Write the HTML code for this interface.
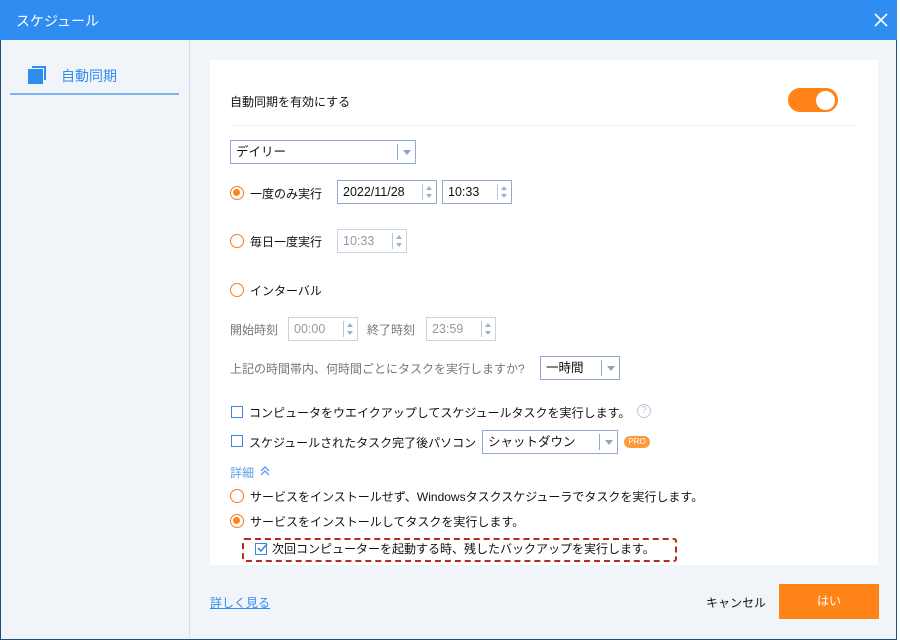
<!DOCTYPE html>
<html><head><meta charset="utf-8"><style>
*{margin:0;padding:0;box-sizing:border-box}
body{width:900px;height:640px;overflow:hidden;background:#fff;font-family:"Liberation Sans","Noto Sans CJK JP",sans-serif;font-size:12px;color:#111;position:relative}
.a{position:absolute;white-space:nowrap}
.win{position:absolute;left:0;top:0;width:897px;height:640px;border:1px solid #1d4f86;background:#f1f5fa;border-top:none}
.title{position:absolute;left:0;top:0;width:897px;height:40px;background:#2f8cf0;color:#fff;font-size:14px}
.card{position:absolute;left:210px;top:60px;width:668px;height:505px;background:#fff}
.box{position:absolute;border:1px solid #8fa9d2;background:#fff;height:24px;font-size:12.5px;padding-left:5px;line-height:23px}
.dis{border-color:#c7d4e8;color:#999}
.sp{position:absolute;right:0;top:3px;width:14px;height:16px;border-left:1px solid #b6c6dc}
.sp:before{content:"";position:absolute;left:3px;top:2px;border:3.5px solid transparent;border-bottom:4px solid #9cb1cf;border-top:none}
.sp:after{content:"";position:absolute;left:3px;top:10px;border:3.5px solid transparent;border-top:4px solid #9cb1cf;border-bottom:none}
.dd{position:absolute;right:0;top:3px;width:18px;height:16px;border-left:1px solid #8fa9d2}
.dd:after{content:"";position:absolute;left:5px;top:6px;border:4px solid transparent;border-top:5px solid #8aa3c6;border-bottom:none}
.r{position:absolute;width:14px;height:14px;border:1.5px solid #f47a2a;border-radius:50%;background:#fff}
.r.on:after{content:"";position:absolute;left:2px;top:2px;width:7px;height:7px;border-radius:50%;background:#ff8317}
.cb{position:absolute;width:12px;height:12px;border:1.5px solid #3a86e6;background:#fff}
</style></head><body>
<div class="win"></div>
<div class="title"><span class="a" style="left:16px;top:11px">スケジュール</span>
<svg class="a" style="left:874px;top:13px" width="14" height="14" viewBox="0 0 14 14"><path d="M1 1L13 13M13 1L1 13" stroke="#fff" stroke-width="1.6"/></svg></div>
<div class="a" style="left:189px;top:40px;width:1px;height:598px;background:#d6dde7"></div>
<div class="a" style="left:32px;top:66px;width:14px;height:14px;border-top:2px solid #2f8cf0;border-right:2px solid #2f8cf0"></div>
<div class="a" style="left:28px;top:69px;width:15px;height:15px;background:#2f8cf0"></div>
<div class="a" style="left:61px;top:66px;font-size:14px;color:#2f8cf0">自動同期</div>
<div class="a" style="left:10px;top:93px;width:169px;height:2px;background:#7bb2f0"></div>

<div class="card"></div>
<div class="a" style="left:230px;top:93px">自動同期を有効にする</div>
<div class="a" style="left:788px;top:88px;width:50px;height:24px;border-radius:12px;background:#ff8317"></div>
<div class="a" style="left:816px;top:91px;width:19px;height:19px;border-radius:50%;background:#fff"></div>
<div class="a" style="left:230px;top:125px;width:628px;height:1px;background:#eef0f3"></div>

<div class="box" style="left:230px;top:140px;width:186px">デイリー<div class="dd"></div></div>

<div class="r on" style="left:230px;top:186px"></div>
<div class="a" style="left:250px;top:185px">一度のみ実行</div>
<div class="box" style="left:337px;top:180px;width:100px">2022/11/28<div class="sp"></div></div>
<div class="box" style="left:442px;top:180px;width:70px">10:33<div class="sp"></div></div>

<div class="r" style="left:230px;top:234px"></div>
<div class="a" style="left:250px;top:233px">毎日一度実行</div>
<div class="box dis" style="left:337px;top:229px;width:70px">10:33<div class="sp"></div></div>

<div class="r" style="left:230px;top:283px"></div>
<div class="a" style="left:250px;top:282px">インターバル</div>

<div class="a" style="left:230px;top:321px;color:#777">開始時刻</div>
<div class="box dis" style="left:288px;top:317px;width:70px">00:00<div class="sp"></div></div>
<div class="a" style="left:367px;top:321px;color:#777">終了時刻</div>
<div class="box dis" style="left:426px;top:317px;width:70px">23:59<div class="sp"></div></div>

<div class="a" style="left:230px;top:360px;color:#777">上記の時間帯内、何時間ごとにタスクを実行しますか?</div>
<div class="box" style="left:540px;top:356px;width:80px">一時間<div class="dd"></div></div>

<div class="cb" style="left:231px;top:406px"></div>
<div class="a" style="left:249px;top:404px">コンピュータをウエイクアップしてスケジュールタスクを実行します。</div>
<div class="a" style="left:637px;top:404px;width:14px;height:14px;border:1.5px solid #b7c6da;border-radius:50%;color:#b7c6da;font-size:10px;text-align:center;line-height:11px">?</div>

<div class="cb" style="left:231px;top:435px"></div>
<div class="a" style="left:249px;top:434px">スケジュールされたタスク完了後パソコン</div>
<div class="box" style="left:482px;top:430px;width:136px">シャットダウン<div class="dd"></div></div>
<div class="a" style="left:624px;top:436px;width:26px;height:12px;border-radius:6px;background:#ff9a3c;color:#fff;font-size:8px;text-align:center;line-height:12px">PRO</div>

<div class="a" style="left:230px;top:464px;color:#5aa0ea">詳細</div>
<svg class="a" style="left:260px;top:466px" width="10" height="10" viewBox="0 0 10 10"><path d="M1 5L5 1L9 5M1 9L5 5L9 9" fill="none" stroke="#5aa0ea" stroke-width="1.4"/></svg>

<div class="r" style="left:230px;top:489px"></div>
<div class="a" style="left:250px;top:488px">サービスをインストールせず、Windowsタスクスケジューラでタスクを実行します。</div>
<div class="r on" style="left:230px;top:514px"></div>
<div class="a" style="left:250px;top:513px">サービスをインストールしてタスクを実行します。</div>

<div class="a" style="left:242px;top:538px;width:435px;height:24px;border:2px dashed #b52a22;border-radius:3px"></div>
<div class="a" style="left:255px;top:543px;width:12px;height:12px;border:1.5px solid #3a86e6"></div>
<svg class="a" style="left:256px;top:543px" width="12" height="11" viewBox="0 0 12 11"><path d="M2 5L5 8L11 1" fill="none" stroke="#3a86e6" stroke-width="1.6"/></svg>
<div class="a" style="left:272px;top:540px">次回コンピューターを起動する時、残したバックアップを実行します。</div>

<div class="a" style="left:210px;top:594px;color:#2f8cf0;text-decoration:underline">詳しく見る</div>
<div class="a" style="left:706px;top:594px">キャンセル</div>
<div class="a" style="left:779px;top:584px;width:100px;height:35px;background:#ff8317;color:#fff;text-align:center;line-height:35px">はい</div>
</body></html>
